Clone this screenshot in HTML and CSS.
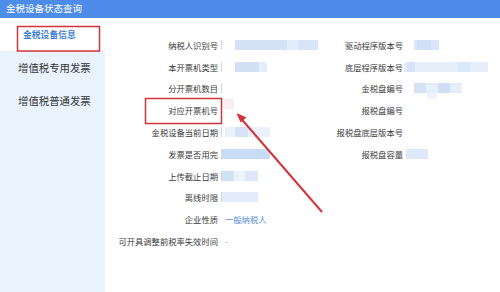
FILE: index.html
```html
<!DOCTYPE html>
<html lang="zh">
<head>
<meta charset="utf-8">
<link rel="stylesheet" href="styles.css">
</head>
<body>
<div class="page">
  <header class="titlebar">金税设备状态查询</header>
  <div class="body">
    <nav class="sidebar">
      <div class="nav-item active">金税设备信息</div>
      <div class="nav-item">增值税专用发票</div>
      <div class="nav-item">增值税普通发票</div>
    </nav>
    <main class="info">
      <div class="lbl">纳税人识别号</div>
      <div class="val bar"><span class="blur b1a"></span><span class="blur b1b"></span><span class="blur b1c"></span></div>
      <div class="lbl2">驱动程序版本号</div>
      <div class="val2"><span class="blur r1a"></span><span class="blur r1b"></span></div>

      <div class="lbl">本开票机类型</div>
      <div class="val bar"><span class="blur b2a"></span><span class="blur b2b"></span></div>
      <div class="lbl2">底层程序版本号</div>
      <div class="val2"><span class="blur r2a"></span><span class="blur r2b"></span><span class="blur r2c"></span></div>

      <div class="lbl">分开票机数目</div>
      <div class="val bar"></div>
      <div class="lbl2">金税盘编号</div>
      <div class="val2"><span class="blur r3a"></span><span class="blur r3b"></span><span class="blur r3c"></span><span class="blur r3d"></span></div>

      <div class="lbl">对应开票机号</div>
      <div class="val"><span class="blur b4a"></span></div>
      <div class="lbl2">报税盘编号</div>
      <div class="val2"></div>

      <div class="lbl">金税设备当前日期</div>
      <div class="val bar"><span class="blur b5a"></span><span class="blur b5b"></span></div>
      <div class="lbl2">报税盘底层版本号</div>
      <div class="val2"></div>

      <div class="lbl">发票是否用完</div>
      <div class="val bar"><span class="blur b6a"></span></div>
      <div class="lbl2">报税盘容量</div>
      <div class="val2"><span class="blur r6a"></span></div>

      <div class="lbl">上传截止日期</div>
      <div class="val bar"><span class="blur b7a"></span><span class="blur b7b"></span><span class="blur b7c"></span></div>
      <div class="lbl2"></div>
      <div class="val2"></div>

      <div class="lbl">离线时限</div>
      <div class="val bar"><span class="blur b8a"></span></div>
      <div class="lbl2"></div>
      <div class="val2"></div>

      <div class="lbl">企业性质</div>
      <div class="val link">一般纳税人</div>
      <div class="lbl2"></div>
      <div class="val2"></div>

      <div class="lbl">可开具调整前税率失效时间</div>
      <div class="val dash">-</div>
      <div class="lbl2"></div>
      <div class="val2"></div>
    </main>
  </div>
  <svg class="annot" width="500" height="292" viewBox="0 0 500 292">
    <rect x="17.5" y="26.5" width="82" height="24.5" fill="none" stroke="#d2343b" stroke-width="1.5"/>
    <rect x="145.5" y="98.5" width="76" height="25" fill="none" stroke="#d2343b" stroke-width="1.5"/>
    <line x1="322" y1="212" x2="241" y2="118.5" stroke="#d2343b" stroke-width="2"/>
    <polygon points="236.5,113 246.5,117.5 240.5,122.5" fill="#d2343b"/>
  </svg>
</div>
</body>
</html>
```
FILE: styles.css
```css
html, body {
  margin: 0;
  padding: 0;
  background: #ffffff;
}
.page {
  position: relative;
  width: 500px;
  height: 292px;
  overflow: hidden;
  font-family: "Noto Sans CJK SC", "Noto Sans", sans-serif;
  color: #3a3a3a;
}
.titlebar {
  height: 18px;
  line-height: 17px;
  background: #4d8ce8;
  color: #ffffff;
  font-size: 9.5px;
  padding-left: 6px;
}
.body {
  display: flex;
  height: 274px;
}
.sidebar {
  width: 105px;
  flex: none;
  background: #e8f3fd;
}
.nav-item {
  height: 33px;
  line-height: 33px;
  padding-left: 18px;
  font-size: 10.4px;
  color: #333333;
}
.nav-item.active {
  background: #ffffff;
  color: #3f7fd8;
  font-weight: bold;
  font-size: 8.8px;
  padding-left: 23px;
}
.info {
  flex: 1;
  display: grid;
  grid-template-columns: 116px 115px 67px 1fr;
  grid-auto-rows: 21.8px;
  padding-top: 16px;
  font-size: 8.3px;
  align-items: center;
}
.lbl, .lbl2 {
  text-align: right;
  white-space: nowrap;
  padding-right: 3px;
}
.lbl2 {
  padding-right: 0;
}
.val, .val2 {
  position: relative;
  height: 10px;
  display: flex;
  align-items: center;
}
.val.bar {
  border-left: 1px solid #d6d6d6;
}
.val.link {
  color: #5a8fdc;
  padding-left: 4px;
  height: auto;
}
.val.dash {
  color: #999999;
  padding-left: 4px;
  height: auto;
}
.blur {
  position: absolute;
  top: 0;
  height: 10px;
  background: #dbe7f8;
}
.b1a { left: 13px; width: 52px; background: #d3e2f7; }
.b1b { left: 65px; width: 30px; background: #e4edfa; }
.b1c { left: 76px; width: 20px; background: #d8e5f8; }
.b2a { left: 13px; width: 24px; background: #d3e1f7; }
.b2b { left: 37px; width: 8px; background: #e6eefa; }
.b4a { left: 3px; width: 10px; top: -6px; background: #f9eeef; }
.b5a { left: 3px; width: 45px; background: #eaf1fb; }
.b5b { left: 13px; width: 13px; background: #d6e3f7; }
.b6a { left: 0; width: 48px; background: #c9dcf5; }
.b7a { left: 0; width: 12px; background: #d3e1f7; }
.b7b { left: 23px; width: 13px; background: #dde8f8; }
.b7c { left: 12px; width: 11px; background: #eef3fb; }
.b8a { left: 0; width: 36px; background: #e3ecfa; }
.r1a { left: 11px; width: 25px; background: #dbe6f8; }
.r1b { left: 14px; width: 14px; background: #d1e0f6; }
.r2a { left: 1px; width: 84px; background: #e6eefa; }
.r2b { left: 4px; width: 8px; background: #d6e3f7; }
.r2c { left: 55px; width: 12px; background: #dbe6f8; }
.r3a { left: 11px; width: 48px; background: #e6eefa; }
.r3b { left: 11px; width: 12px; background: #d6e3f7; }
.r3c { left: 35px; width: 12px; background: #cfdef6; }
.r3d { left: 24px; width: 10px; top: 10px; height: 6px; background: #eef3fb; }
.r6a { left: 3px; width: 22px; background: #dde8f8; }
.annot {
  position: absolute;
  left: 0;
  top: 0;
  pointer-events: none;
}
```
